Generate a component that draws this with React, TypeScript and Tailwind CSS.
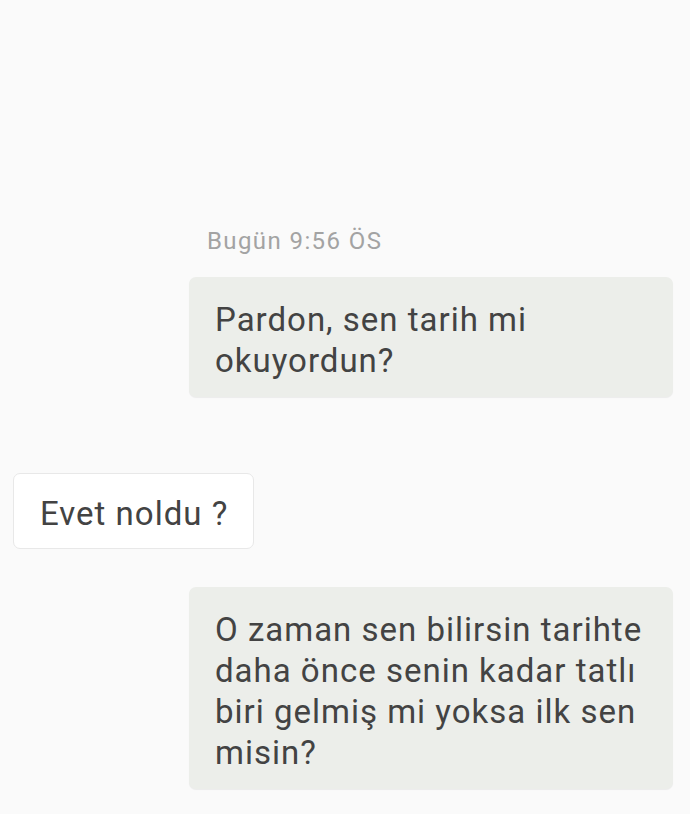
import React from 'react';

const font = { fontFamily: 'Roboto, "Noto Sans", sans-serif' };

function OutBubble({ lines }: { lines: string[] }) {
  return (
    <div className="ml-auto mr-[17px] w-[484px] rounded-[7px] bg-[#eceeea] pl-[26px] pr-3 pt-[22px] pb-[16px] shadow-[0_1px_1px_rgba(0,0,0,0.06)]">
      {lines.map((l, i) => (
        <div key={i} className="whitespace-nowrap text-[33px] leading-[41px] tracking-[1px] text-[#434343]">
          {l}
        </div>
      ))}
    </div>
  );
}

export default function App() {
  return (
    <div className="w-[690px] h-[814px] bg-[#fafafa] overflow-hidden flex flex-col" style={font}>
      <div className="mt-[226px] ml-[207px] text-[24px] leading-[30px] tracking-[1.4px] text-[#a3a3a3]">Bugün 9:56 ÖS</div>

      <div className="mt-[21px]">
        <OutBubble lines={['Pardon, sen tarih mi', 'okuyordun?']} />
      </div>

      <div className="mt-[76px] ml-[13px] w-[241px] rounded-[7px] border border-[#e8e8e8] bg-white pl-[26px] pt-[19px] pb-[14px]">
        <div className="text-[33px] leading-[41px] tracking-[1px] text-[#434343]">Evet noldu ?</div>
      </div>

      <div className="mt-[38px]">
        <OutBubble
          lines={[
            'O zaman sen bilirsin tarihte',
            'daha önce senin kadar tatlı',
            'biri gelmiş mi yoksa ilk sen',
            'misin?',
          ]}
        />
      </div>
    </div>
  );
}
